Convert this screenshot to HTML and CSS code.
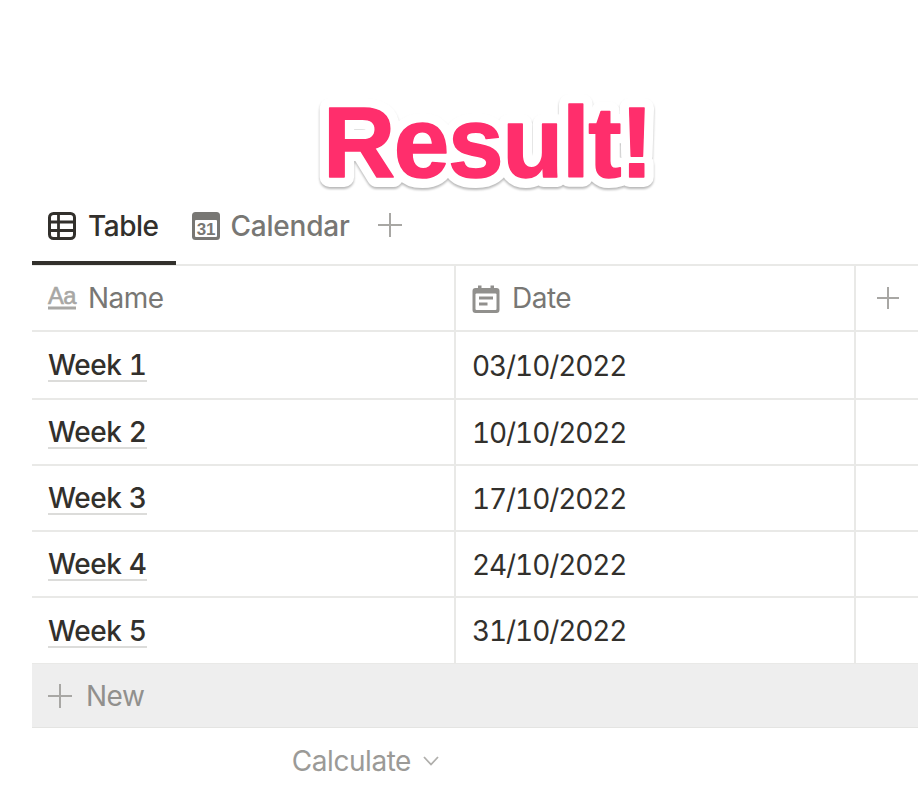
FILE: index.html
```html
<!DOCTYPE html>
<html lang="en">
<head>
<meta charset="utf-8">
<title>Result!</title>
<link rel="stylesheet" href="styles.css">
</head>
<body>
<div class="hero">
  <svg class="sticker" viewBox="0 0 360 110" width="360" height="110">
    <text id="rtext" class="rt" x="12" y="87">Result!</text>
    <use href="#rtext" class="rtop"/>
  </svg>
</div>
<main class="db">
  <nav class="tabs">
    <div class="tab active">
      <svg class="ti" viewBox="0 0 28 28"><rect x="1.500" y="1.500" width="25" height="25" rx="4" fill="none" stroke="#32302c" stroke-width="3"/><path d="M1.500 10H26.500M1.500 18.500H26.500M10.500 1.500V26.500" fill="none" stroke="#32302c" stroke-width="2.800"/></svg>
      <span>Table</span>
    </div>
    <div class="tab">
      <svg class="ti" viewBox="0 0 28 28"><rect x="0" y="0" width="28" height="28" rx="3.500" fill="#787774"/><rect x="3" y="8" width="22" height="17" rx="1" fill="#fff"/><text x="14" y="22.500" class="cal31">31</text></svg>
      <span>Calendar</span>
    </div>
    <svg class="tplus" viewBox="0 0 24 24"><path d="M12 0V24M0 12H24" stroke="#a8a7a4" stroke-width="2" fill="none"/></svg>
  </nav>
  <div class="row head">
    <div class="cell c1">
      <svg class="hi aa" viewBox="0 0 28 24"><text x="0" y="17" class="aat" textLength="28" lengthAdjust="spacingAndGlyphs">Aa</text><rect x="0" y="19.500" width="28" height="3" fill="#a8a7a4"/></svg>
      <span>Name</span>
    </div>
    <div class="cell c2">
      <svg class="hi" viewBox="0 0 28 28"><path d="M6 0.500H9.500V3H18.500V0.500H22V3H24.500A3 3 0 0 1 27.500 6V25A3 3 0 0 1 24.500 28H3.500A3 3 0 0 1 0.500 25V6A3 3 0 0 1 3.500 3H6Z" fill="#91908d"/><rect x="3.500" y="8.500" width="21" height="16.500" rx="1" fill="#fff"/><path d="M7 13H21M7 19H15.500" stroke="#91908d" stroke-width="2.800" fill="none"/></svg>
      <span>Date</span>
    </div>
    <div class="cell c3">
      <svg class="aplus" viewBox="0 0 22 22"><path d="M11 0V22M0 11H22" stroke="#a8a7a4" stroke-width="2" fill="none"/></svg>
    </div>
  </div>
  <div class="row r68"><div class="cell c1"><span class="name">Week 1</span></div><div class="cell c2">03/10/2022</div><div class="cell c3"></div></div>
  <div class="row"><div class="cell c1"><span class="name">Week 2</span></div><div class="cell c2">10/10/2022</div><div class="cell c3"></div></div>
  <div class="row"><div class="cell c1"><span class="name">Week 3</span></div><div class="cell c2">17/10/2022</div><div class="cell c3"></div></div>
  <div class="row"><div class="cell c1"><span class="name">Week 4</span></div><div class="cell c2">24/10/2022</div><div class="cell c3"></div></div>
  <div class="row last"><div class="cell c1"><span class="name">Week 5</span></div><div class="cell c2">31/10/2022</div><div class="cell c3"></div></div>
  <div class="new">
    <svg class="nplus" viewBox="0 0 24 24"><path d="M12 0V24M0 12H24" stroke="#a8a7a4" stroke-width="2" fill="none"/></svg>
    <span>New</span>
  </div>
  <div class="calc">
    <span>Calculate</span>
    <svg class="chev" viewBox="0 0 16 10"><path d="M1 1L8 8.500L15 1" stroke="#b0afac" stroke-width="1.800" fill="none"/></svg>
  </div>
</main>
</body>
</html>
```
FILE: styles.css
```css
html, body { margin: 0; padding: 0; background: #fff; }
body { width: 918px; height: 802px; overflow: hidden; font-family: Inter, "Liberation Sans", sans-serif; color: #32302c; font-variant-numeric: tabular-nums; }
.hero { height: 206px; box-sizing: border-box; padding: 90px 0 0 311px; }
.sticker { display: block; overflow: visible; --s: #fff; --w: 20px; filter: drop-shadow(0 2px 1px rgba(0,0,0,.28)); }
.rt {
  font-family: "Liberation Sans", Arial, sans-serif; font-weight: 700; font-size: 100px; letter-spacing: -1.400px;
  fill: #ff2e6c; stroke: var(--s); stroke-width: var(--w); stroke-linejoin: round; paint-order: stroke fill;
}
.rtop { --s: #ff2e6c; --w: 1.500px; }
.db { margin-left: 32px; }
.tabs { display: flex; align-items: flex-start; height: 58px; border-bottom: 2px solid #e9e9e7; position: relative; }
.tab { display: flex; align-items: center; gap: 12px; height: 40px; padding: 0 16px; font-size: 28px; font-weight: 500; color: #787774; letter-spacing: -.2px; }
.tab + .tab { padding-right: 15px; gap: 10px; }
.tab.active { color: #32302c; position: relative; letter-spacing: -.5px; padding-right: 18px; }
.tab.active::after { content: ""; position: absolute; left: 0; right: 0; top: 55px; height: 4px; background: #32302c; }
.ti { width: 28px; height: 28px; flex: none; }
.cal31 { font: 700 17px "Liberation Sans", sans-serif; fill: #787774; text-anchor: middle; }
.tplus { width: 24px; height: 24px; margin: 7px 0 0 13px; }
.row { display: flex; height: 66px; box-sizing: border-box; border-bottom: 2px solid #e9e9e7; font-size: 28px; }
.r68 { height: 68px; }
.row.last { height: 65px; border-bottom: 0; }
.cell { display: flex; align-items: center; box-sizing: border-box; padding: 3px 0 0 16px; border-right: 2px solid #e9e9e7; flex: none; }
.c1 { width: 424px; letter-spacing: -.4px; }
.c2 { width: 400px; padding-top: 1px; letter-spacing: -1.100px; }
.c3 { flex: 1; border-right: 0; padding-left: 21px; }
.head .cell { gap: 12px; color: #787774; letter-spacing: -.5px; padding-top: 1px; }
.head .c3 { padding-top: 0; }
.head .cell span { position: relative; top: -.5px; }
.hi { width: 28px; height: 28px; flex: none; overflow: visible; }
.hi.aa { height: 24px; }
.aat { font: 400 24px "Liberation Sans", sans-serif; fill: #a8a7a4; stroke: #a8a7a4; stroke-width: .6px; }
.aplus { width: 22px; height: 22px; }
.name { font-weight: 500; border-bottom: 2px solid #dcdcda; line-height: 29px; }
.new { display: flex; align-items: center; gap: 14px; height: 65px; box-sizing: border-box; padding-left: 16px; background: #eeeeee; border-top: 1px solid #e9e9e7; border-bottom: 1px solid #e4e4e2; font-size: 28px; color: #91908d; letter-spacing: -.5px; }
.nplus { width: 24px; height: 24px; }
.calc { display: flex; align-items: center; justify-content: flex-end; gap: 12px; width: 407px; height: 65px; font-size: 28px; color: #9b9a97; letter-spacing: -.45px; }
.chev { width: 16px; height: 10px; }
```
